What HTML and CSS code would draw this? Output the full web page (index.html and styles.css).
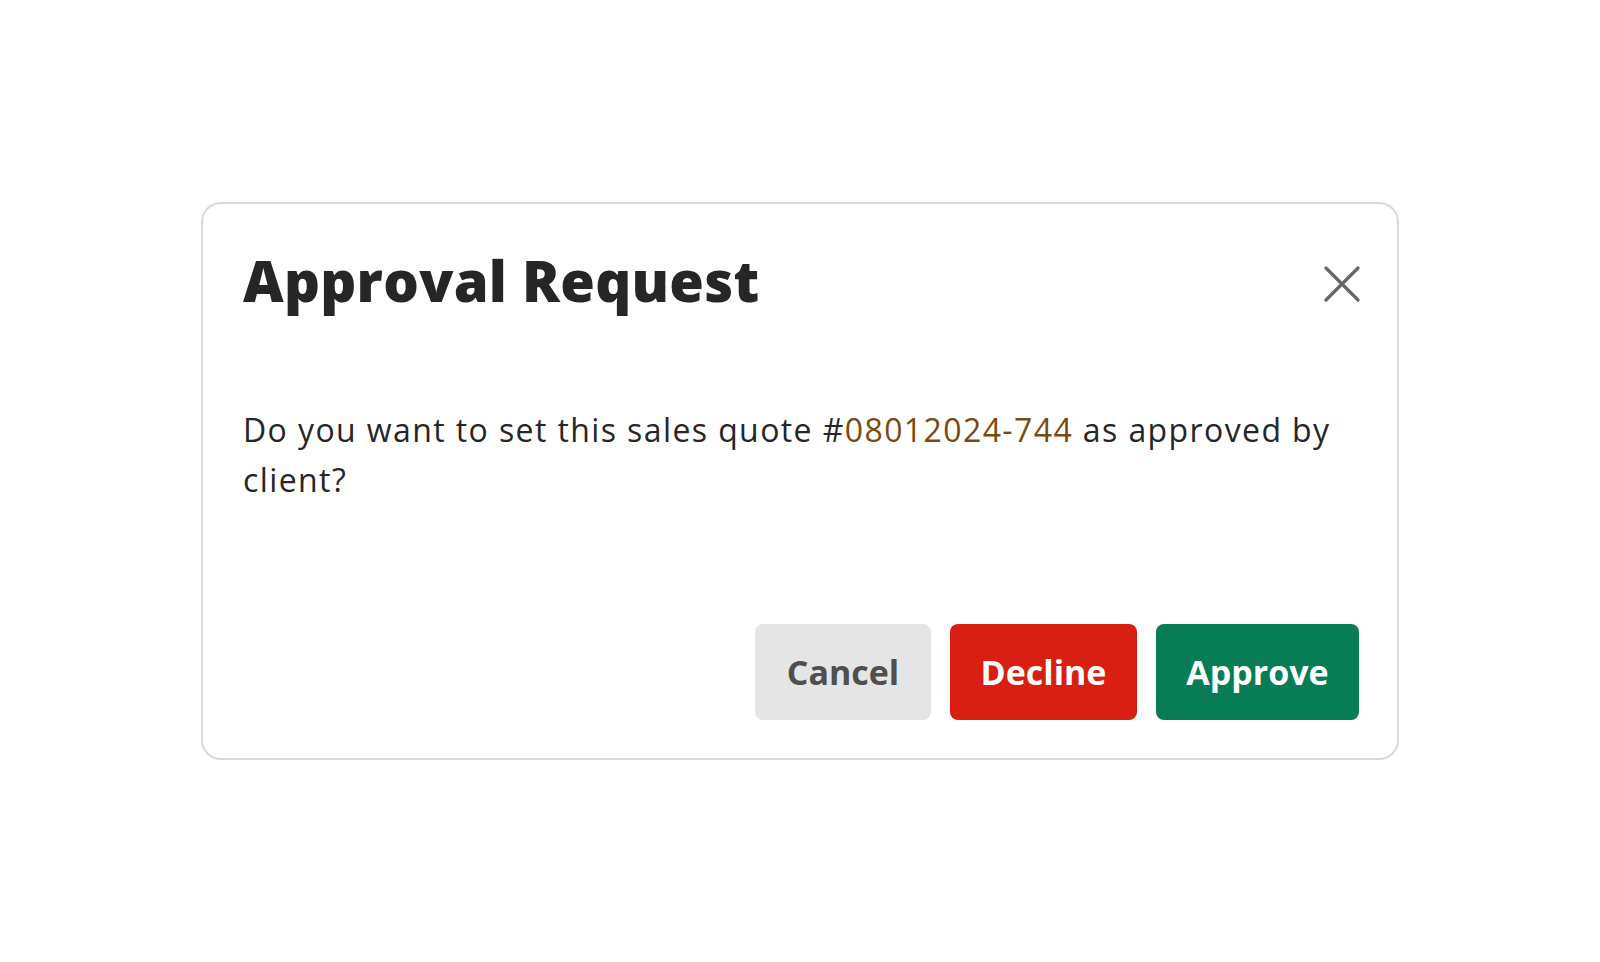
FILE: index.html
```html
<!DOCTYPE html>
<html lang="en">
<head>
<meta charset="utf-8">
<title>Approval Request</title>
<link rel="stylesheet" href="styles.css">
</head>
<body>
<div class="page">
  <div class="dialog" role="dialog" aria-labelledby="dlg-title">
    <div class="dialog-header">
      <h1 id="dlg-title" class="dialog-title">Approval Request</h1>
      <button class="close-btn" aria-label="Close">
        <svg width="36" height="36" viewBox="0 0 36 36" fill="none" stroke="#666666" stroke-width="3.2" stroke-linecap="round">
          <path d="M2 2 L34 34 M34 2 L2 34"/>
        </svg>
      </button>
    </div>
    <p class="dialog-body">Do you want to set this sales quote #<span class="quote-no">08012024-744</span> as approved by client?</p>
    <div class="dialog-actions">
      <button class="btn btn-cancel">Cancel</button>
      <button class="btn btn-decline">Decline</button>
      <button class="btn btn-approve">Approve</button>
    </div>
  </div>
</div>
</body>
</html>
```
FILE: styles.css
```css
* { box-sizing: border-box; }
html, body { margin: 0; padding: 0; background: #ffffff; }
body { font-family: "Open Sans", "Lato", sans-serif; color: #262626; }
.page {
  width: 1600px;
  height: 962px;
  display: flex;
  align-items: center;
  justify-content: center;
}
.dialog {
  width: 1198px;
  height: 558px;
  border: 2px solid #d9d9d9;
  border-radius: 20px;
  padding: 38px 38px 38px 40px;
  display: flex;
  flex-direction: column;
}
.dialog-header {
  display: flex;
  justify-content: space-between;
  align-items: flex-start;
}
.dialog-title {
  margin: 0;
  font-size: 56px;
  font-weight: 800;
  line-height: 76px;
  letter-spacing: 0.3px;
  color: #262626;
}
.close-btn {
  background: none;
  border: 0;
  padding: 0;
  margin-top: 24px;
  margin-right: -1px;
  width: 36px;
  height: 36px;
  cursor: pointer;
}
.close-btn svg { display: block; }
.dialog-body {
  margin: 87px 0 0;
  font-size: 32px;
  line-height: 50px;
  letter-spacing: 1.4px;
  color: #262626;
  max-width: 1110px;
}
.quote-no { color: #7a4a0c; }
.dialog-actions {
  margin-top: auto;
  display: flex;
  justify-content: flex-end;
  gap: 19px;
}
.btn {
  height: 96px;
  border: 0;
  border-radius: 8px;
  padding: 0;
  font-family: inherit;
  font-size: 34px;
  font-weight: 700;
  cursor: pointer;
}
.btn-cancel { background: #e5e5e5; color: #4f4f4f; width: 176px; }
.btn-decline { background: #d91e12; color: #ffffff; width: 187px; }
.btn-approve { background: #087d55; color: #ffffff; width: 203px; }
```
